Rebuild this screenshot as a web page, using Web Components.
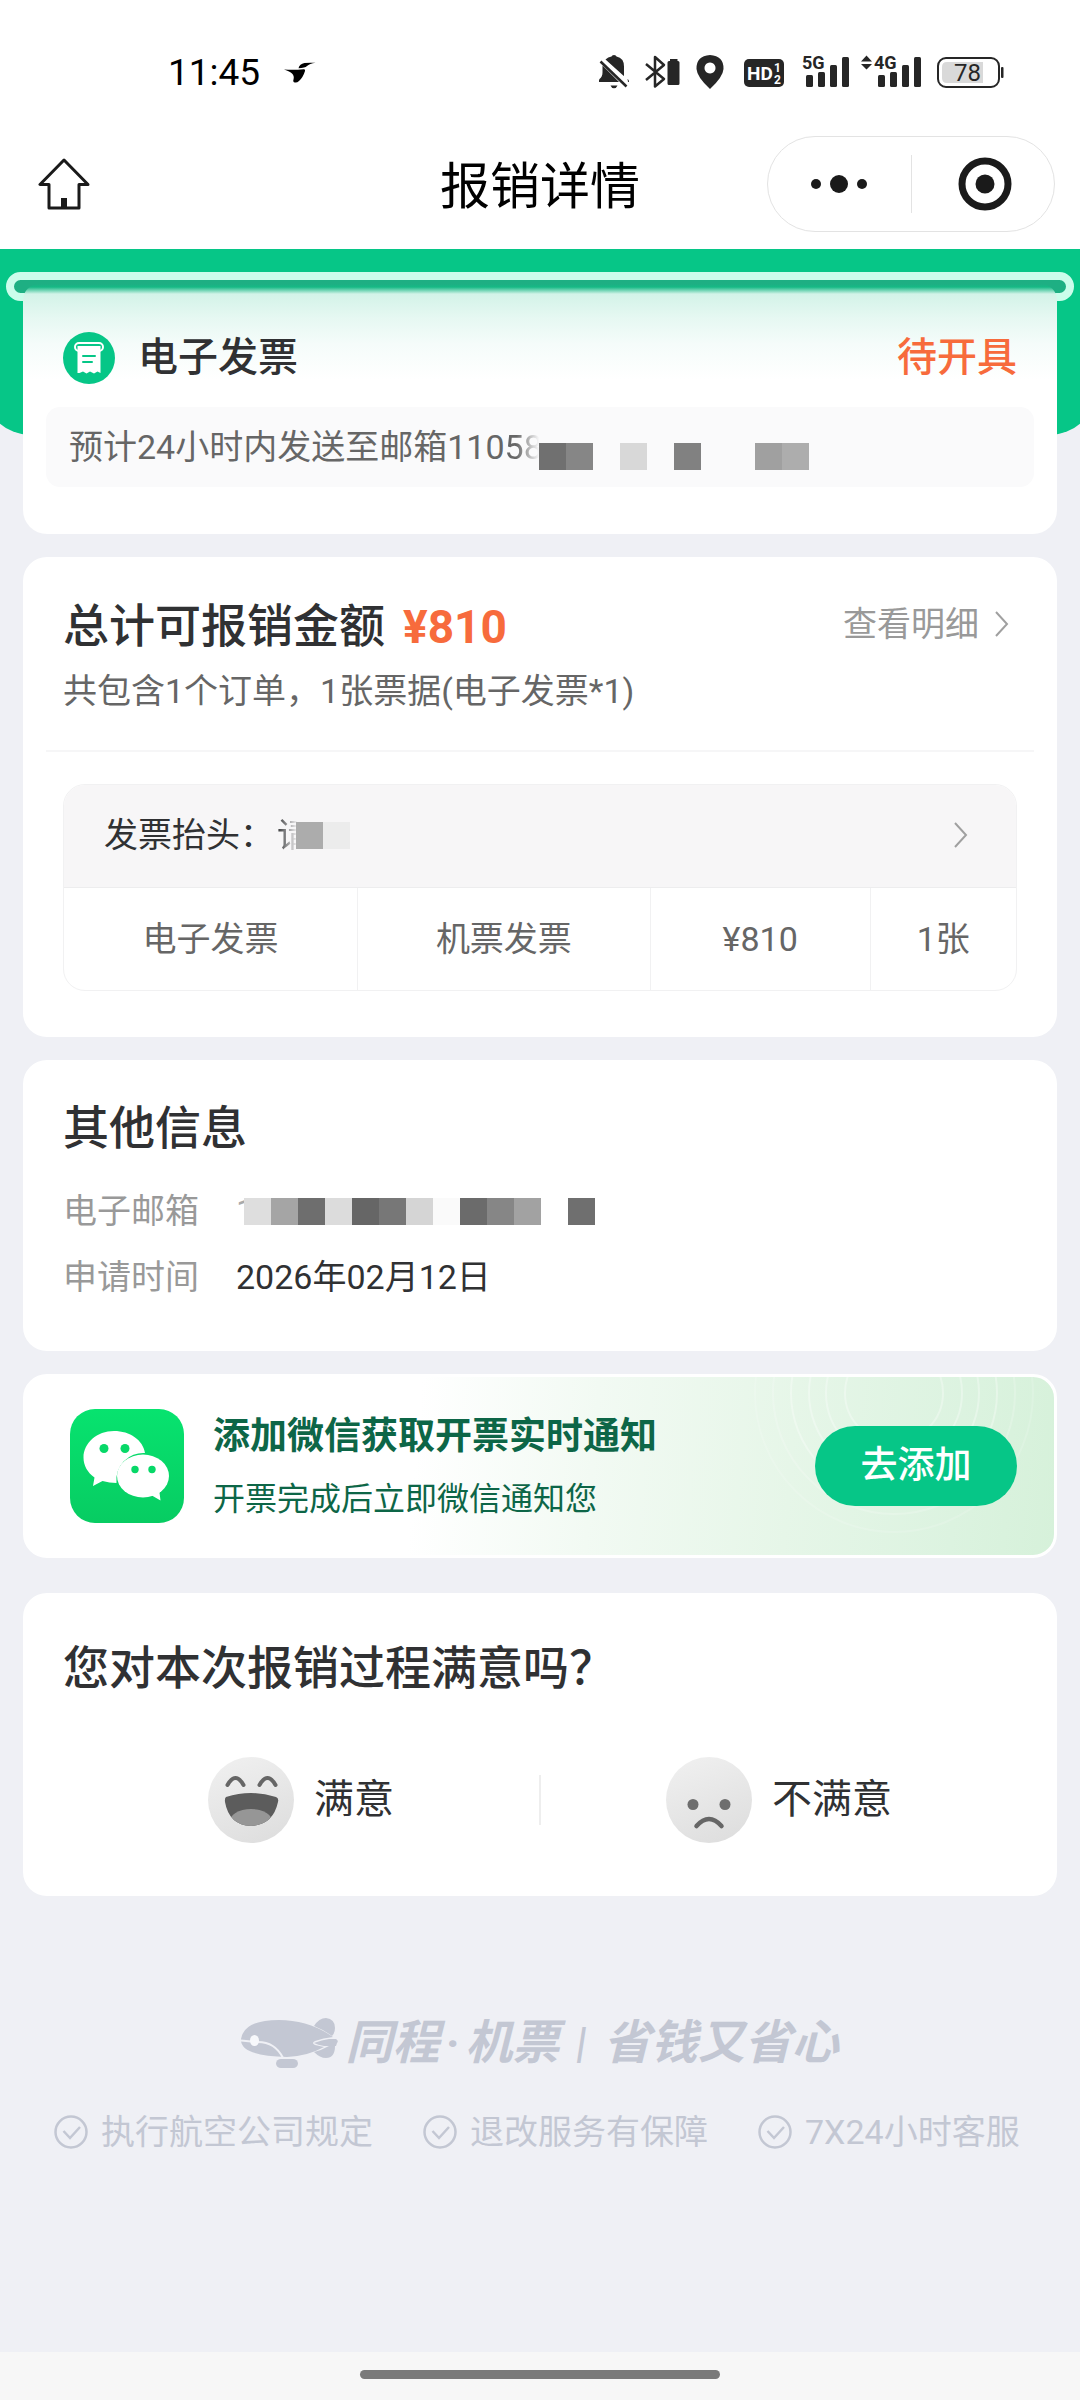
<!DOCTYPE html>
<html lang="zh-CN">
<head>
<meta charset="utf-8">
<meta name="viewport" content="width=device-width, initial-scale=1">
<title>报销详情</title>
<style>
  html, body { margin: 0; }
  body {
    --green: #06c687;
    --orange: #f76b3c;
    --ink: #303133;
    --text: #666;
    --muted: #999;
    --line: #f1f1f2;
    background: #eff0f5;
    color: var(--ink);
    font-family: Roboto, "Noto Sans CJK SC", sans-serif;
    font-size: 34px;
    line-height: 48px;
  }
</style>
</head>
<body>
<reimburse-page></reimburse-page>

<script>
const reset = `
  *, *::before, *::after { box-sizing: border-box; }
  button { font: inherit; color: inherit; background: none; border: 0; padding: 0; margin: 0; text-align: inherit; }
  a { color: inherit; text-decoration: none; }
  h1, h2, h3, p, dl, dd, dt, ul { margin: 0; padding: 0; font: inherit; }
  svg { display: block; flex: none; }
`;
function define(name, html) {
  const tpl = document.createElement('template');
  tpl.innerHTML = html.replace('<style>', '<style>' + reset);
  customElements.define(name, class extends HTMLElement {
    constructor() {
      super();
      this.attachShadow({ mode: 'open' }).append(tpl.content.cloneNode(true));
    }
  });
}

define('status-bar', `
<style>
  :host { display: flex; justify-content: space-between; align-items: flex-start; padding: 54px 76px 0 168px; height: 112px; color: #000; }
  .time { display: flex; align-items: center; gap: 24px; font-size: 37px; line-height: 38px; }
  .icons { display: flex; }
  .icons svg { fill: #262626; overflow: visible; }
</style>
<div class="time"><span>11:45</span>
  <svg width="32" height="22" viewBox="287 63 32 22"><path d="M287 70.500q10 .8 19.500-.3q2.200-.2 1.500 1.800q-2 6.500-6 10q-2 1.800-4 1.500q-2.500-.3-1.500-3q1-3.500-1.500-6q-2-2.200-8-4z"/><path d="M301.500 69.200q1-4.200 6-5.200q5-.6 11-.2q-6 1-8.500 3.200q-2 2-8.500 2.200z"/></svg>
</div>
<div class="icons">
  <svg width="46" height="36" viewBox="599 54 46 36"><path d="M605.500 59.500q2.500-2.600 6-3q.3-1.500 2.500-1.500t2.500 1.500q7.500 1.500 7.500 10v9l-.2.500zM602.500 65.500v7q0 4-3 6.500q-.8 1-.5 3h20zM627.500 78.800q1.700 1.200 1.500 3.200h-1zM610.500 85.500h7q-1 2.700-3.500 2.700t-3.500-2.700z"/><path d="M600.500 61.500l26 25" stroke="#262626" stroke-width="2.500" fill="none"/></svg>
  <svg width="51" height="36" viewBox="645 54 51 36"><path d="M646 64l18 15-9 7.500V57l9 8-18 15" fill="none" stroke="#262626" stroke-width="2.500" stroke-linejoin="round"/><path d="M670 59h7.500v2h.5q1.500 0 1.500 1.500v21q0 1.500-1.500 1.500h-9q-1.500 0-1.500-1.500v-21q0-1.500 1.500-1.500h1z"/></svg>
  <svg width="48" height="36" viewBox="696 54 48 36"><path fill-rule="evenodd" d="M710 55q-14 1-13.500 14q.5 8 13.500 20q13-12 13.500-20q.5-13-13.500-14zM710 62.500a5.500 5.500 0 1 0 .01 0z"/></svg>
  <svg width="57" height="36" viewBox="744 54 57 36"><rect x="744" y="59" width="40" height="28" rx="5"/><g fill="#fff" font-weight="700"><text x="747" y="80" font-size="19">HD</text><text x="774" y="72" font-size="12">1</text><text x="774" y="84" font-size="12">2</text></g></svg>
  <svg width="60" height="36" viewBox="801 54 60 36"><text x="802" y="69" font-size="18" font-weight="700">5G</text><rect x="806" y="75" width="7" height="12" rx="1.500"/><rect x="818" y="72" width="7" height="15" rx="1.500"/><rect x="830" y="65" width="7" height="22" rx="1.500"/><rect x="842" y="57" width="7" height="30" rx="1.500"/></svg>
  <svg width="76" height="36" viewBox="861 54 76 36"><path d="M861 61.500l5.500-6 5.500 6zM861 64l5.500 5.500 5.500-5.500z"/><text x="874" y="69" font-size="18" font-weight="700">4G</text><rect x="878" y="75" width="7" height="12" rx="1.500"/><rect x="890" y="72" width="7" height="15" rx="1.500"/><rect x="902" y="65" width="7" height="22" rx="1.500"/><rect x="914" y="57" width="7" height="30" rx="1.500"/></svg>
  <svg width="67" height="36" viewBox="937 54 67 36"><rect x="938" y="58" width="61" height="29" rx="8" fill="#fff" stroke="#262626" stroke-width="2"/><path d="M947 62h36v21h-36q-5 0-5-5v-11q0-5 5-5z" fill="#d9d9d9"/><text x="954" y="81" font-size="24">78</text><rect x="1001" y="67" width="2.500" height="11" rx="1"/></svg>
</div>`);

define('nav-bar', `
<style>
  :host { display: grid; grid-template-columns: 1fr auto 1fr; align-items: center; padding: 24px 25px 17px; background: #fff; color: #000; }
  h1 { font-size: 50px; line-height: 60px; padding-top: 6px; }
  .home { justify-self: start; margin-left: 13px; }
  .capsule { justify-self: end; display: flex; align-items: center; width: 288px; height: 96px; border: 1px solid #e3e3e3; border-radius: 48px; }
  .capsule button { flex: 1; display: flex; justify-content: center; }
  .capsule button + button { border-left: 1px solid #e3e3e3; }
</style>
<button class="home" aria-label="首页"><svg width="52" height="52" viewBox="0 0 52 52" fill="none" stroke="#1a1a1a" stroke-width="3" stroke-linejoin="round"><path d="M26 2L2 26.500h9V50h30V26.500h9z"/><path d="M26 40v10" stroke-width="6"/></svg></button>
<h1><slot></slot></h1>
<div class="capsule">
  <button aria-label="更多"><svg width="58" height="58" viewBox="0 0 58 58" fill="#1a1a1a"><circle cx="6" cy="29" r="5"/><circle cx="29" cy="29" r="9"/><circle cx="52" cy="29" r="5"/></svg></button>
  <button aria-label="关闭"><svg width="58" height="58" viewBox="0 0 58 58"><circle cx="31" cy="29" r="23" fill="none" stroke="#1a1a1a" stroke-width="7"/><circle cx="31" cy="29" r="9.500" fill="#1a1a1a"/></svg></button>
</div>`);

define('page-card', `
<style>
  :host { display: block; margin: 0 23px; padding: 40px 23px 46px; background: #fff; border-radius: 24px; }
  .inner { padding: 0 17px; }
  h2 { font-size: 46px; line-height: 56px; font-weight: 500; }
</style>
<div class="inner"><h2><slot name="title"></slot></h2></div>
<slot></slot>`);

customElements.define('mosaic-strip', class extends HTMLElement {
  connectedCallback() {
    const root = this.attachShadow({ mode: 'open' });
    const cells = this.getAttribute('colors').split(' ')
      .map(c => `<i style="background:${c === '-' ? 'transparent' : c}"></i>`).join('');
    root.innerHTML = `<style>:host{display:flex;flex:none;position:relative}i{width:27px;height:27px}</style>${cells}`;
  }
});

define('chevron-icon', `
<style>:host { display: block; }</style>
<svg width="14" height="26" viewBox="0 0 14 26" fill="none" stroke="#a0a0a0" stroke-width="2"><path d="M1 1l11 12L1 25"/></svg>`);

define('invoice-hero', `
<style>
  :host { display: block; position: relative; overflow: hidden; padding-top: 23px; }
  .backdrop { position: absolute; inset: 0 -17px 99px; background: var(--green); border-radius: 0 0 48px 48px; }
  .slit { position: relative; margin: 0 6px; height: 29px; border: 8px solid #cbfdeb; border-radius: 15px; background: #1eaf83; }
  .card { position: relative; margin: -17px 23px 0; padding: 48px 23px 47px; border-radius: 16px 16px 24px 24px;
    background: linear-gradient(#1eaf83 0, #16b985 3px, #d3f3e8 10px, #e6f8f2 34px, #f5fcfa 60px, #fff 96px); }
  .row { display: flex; align-items: center; gap: 23px; padding: 0 17px; font-size: 40px; line-height: 52px; font-weight: 500; }
  .state { margin-left: auto; color: var(--orange); }
  .note { display: flex; align-items: center; height: 80px; margin-top: 23px; padding: 0 23px; background: #fafafb; border-radius: 14px; color: var(--text); }
  .fade { -webkit-mask: linear-gradient(90deg, #000 30%, transparent 90%); mask: linear-gradient(90deg, #000 30%, transparent 90%); }
  mosaic-strip { margin: 18px 0 0 -4px; }
</style>
<div class="backdrop"></div>
<div class="slit"></div>
<div class="card">
  <div class="row">
    <svg width="52" height="52" viewBox="0 0 52 52"><circle cx="26" cy="26" r="26" fill="#06c687"/><rect x="12" y="11" width="28" height="8" rx="4" fill="none" stroke="#fff" stroke-width="2"/><path d="M14.500 14h23v27l-3-1.500-3.500 2-4-2-3.500 2-3.500-2-3.500 1.500h-2z" fill="#fff"/><path d="M20 24h12M20 30h9" stroke="#06c687" stroke-width="2" stroke-linecap="round"/></svg>
    <span>电子发票</span><span class="state">待开具</span>
  </div>
  <p class="note"><span>预计24小时内发送至邮箱110</span><span class="fade">58</span><mosaic-strip colors="#707070 #868686 - #d8d8d8 - #818181 - - #a0a0a0 #adadad"></mosaic-strip></p>
</div>`);

define('amount-summary', `
<style>
  :host { display: block; }
  .amount { margin-left: 18px; color: var(--orange); font-weight: 700; font-size: 46px; line-height: 56px; padding-top: 2px; }
  .top { display: flex; align-items: center; padding: 0 17px; }
  h2 { font-size: 46px; line-height: 56px; font-weight: 500; }
  .more { margin-left: auto; display: flex; align-items: center; gap: 16px; color: var(--muted); padding: 0 8px 4px 0; }
  .desc { margin-top: 12px; padding: 0 17px 35px; border-bottom: 2px solid #f6f6f7; color: var(--text); }
  .box { margin: 32px 17px 0; border: 1px solid var(--line); border-radius: 22px; overflow: hidden; }
  table { width: 100%; table-layout: fixed; border-spacing: 0; color: var(--text); text-align: center; }
  th { padding: 0; font-weight: 400; background: #f7f6f7; color: var(--ink); border-bottom: 1px solid #ededee; }
  th button { display: flex; align-items: center; width: 100%; height: 102px; padding: 0 48px 2px 40px; }
  th chevron-icon { margin-left: auto; }
  td { height: 102px; padding: 0; }
  td + td { border-left: 1px solid var(--line); }
  .fade { margin-left: 3px; -webkit-mask: linear-gradient(90deg, #000, transparent 60%); mask: linear-gradient(90deg, #000, transparent 60%); }
  th mosaic-strip { margin-left: -15px; }
  .a { width: calc(100% * 4 / 13); } .b { width: calc(100% * 3 / 13); }
</style>
<div class="top"><h2>总计可报销金额</h2><span class="amount">¥810</span><a class="more" href="#detail">查看明细<chevron-icon></chevron-icon></a></div>
<p class="desc">共包含1个订单，1张票据(电子发票*1)</p>
<div class="box"><table>
  <colgroup><col class="a"><col class="a"><col class="b"><col></colgroup>
  <thead><tr><th colspan="4"><button><span>发票抬头：</span><span class="fade">请</span><mosaic-strip colors="#acacac #ececec"></mosaic-strip><chevron-icon></chevron-icon></button></th></tr></thead>
  <tbody><tr><td>电子发票</td><td>机票发票</td><td>¥810</td><td>1张</td></tr></tbody>
</table></div>`);

define('info-list', `
<style>
  :host { display: block; padding: 22px 17px 0; }
  dl { display: grid; grid-template-columns: auto 1fr; column-gap: 37px; line-height: 66px; }
  dt { color: var(--muted); }
  dd { display: flex; align-items: center; }
  .one { color: #aaa; }
  dd mosaic-strip { margin-left: -11px; }
</style>
<dl>
  <dt>电子邮箱</dt><dd><span class="one">1</span><mosaic-strip colors="#dedede #a5a5a5 #6e6e6e #dcdcdc #666 #777 #d5d5d5 #fafafa #6b6b6b #868686 #a2a2a2 - #6f6f6f"></mosaic-strip></dd>
  <dt>申请时间</dt><dd>2026年02月12日</dd>
</dl>`);

define('wechat-banner', `
<style>
  :host { display: flex; align-items: center; position: relative; overflow: hidden; margin: 0 23px; height: 184px; padding: 0 37px 0 44px; border: 3px solid #fff; border-radius: 24px;
    background: linear-gradient(95deg, #fff 38%, #f2faf3 55%, #e6f6e8 74%, #dcf3e0 90%, #d6f1da); color: #0d6647; }
  .rings { position: absolute; top: 0; right: 0; }
  .logo { position: relative; }
  .copy { margin-left: 29px; position: relative; }
  h3 { font-size: 37px; line-height: 56px; font-weight: 700; }
  p { font-size: 32px; line-height: 48px; margin-top: 10px; }
  button { position: relative; margin-left: auto; width: 202px; height: 80px; border-radius: 40px; background: var(--green); color: #fff; text-align: center; font-size: 37px; font-weight: 500; }
</style>
<svg class="rings" width="320" height="178" viewBox="734 1377 320 178" fill="none" stroke="#fff" stroke-opacity=".32" stroke-width="2"><circle cx="894" cy="1393" r="49"/><circle cx="894" cy="1393" r="68"/><circle cx="894" cy="1393" r="85"/><circle cx="894" cy="1393" r="103"/><circle cx="894" cy="1393" r="121" stroke-opacity=".2"/><circle cx="894" cy="1393" r="139" stroke-opacity=".15"/></svg>
<svg class="logo" width="114" height="114" viewBox="0 0 114 114"><defs><linearGradient id="g" x2="0" y2="1"><stop stop-color="#07e36f"/><stop offset="1" stop-color="#07cc62"/></linearGradient></defs><rect width="114" height="114" rx="25" fill="url(#g)"/>
  <path d="M44 22C27 22 13.500 34 13.500 48.500c0 8 4 15 11 20l-1.500 8.500 9.500-5q7 2 14 2a27 27 0 0 1 28.500-30C73 31 60 22 44 22z" fill="#fff"/>
  <ellipse cx="73" cy="67" rx="26" ry="21.500" fill="#fff"/><path d="M81 86l9.500 5.500-1-8 3-3z" fill="#fff"/>
  <g fill="#07d868"><circle cx="34" cy="39.500" r="4.500"/><circle cx="55" cy="39.500" r="4.500"/><circle cx="65" cy="60.500" r="3.700"/><circle cx="82" cy="60.500" r="3.700"/></g></svg>
<div class="copy"><h3>添加微信获取开票实时通知</h3><p>开票完成后立即微信通知您</p></div>
<button>去添加</button>`);

define('mood-survey', `
<style>
  :host { display: flex; align-items: center; margin: 61px 17px 0; }
  button { flex: 1; display: flex; align-items: center; justify-content: center; gap: 20px; font-size: 40px; }
  hr { width: 2px; height: 50px; border: 0; margin: 0; background: #eee; }
</style>
<button><svg width="86" height="86" viewBox="0 0 86 86"><defs><linearGradient id="f" x1=".3" y1="0" x2=".7" y2="1"><stop stop-color="#efefef"/><stop offset="1" stop-color="#dedede"/></linearGradient><clipPath id="m"><path d="M18 40q25-8 50 0q3 1 2 5q-5 23-27 24q-22-1-26-24q-.5-4 1-5z"/></clipPath></defs><circle cx="43" cy="43" r="43" fill="url(#f)"/><path d="M19.500 28q8-14 16 0M51.500 28q8-14 16 0" fill="none" stroke="#666" stroke-width="4" stroke-linecap="round"/><g clip-path="url(#m)"><rect x="10" y="30" width="66" height="40" fill="#5c5c5c"/><ellipse cx="43" cy="66" rx="22" ry="14" fill="#969696"/></g></svg><span>满意</span></button>
<hr>
<button><svg width="86" height="86" viewBox="0 0 86 86"><defs><linearGradient id="f" x1=".3" y1="0" x2=".7" y2="1"><stop stop-color="#efefef"/><stop offset="1" stop-color="#dedede"/></linearGradient></defs><circle cx="43" cy="43" r="43" fill="url(#f)"/><circle cx="27" cy="47.500" r="5.500" fill="#6e6e6e"/><circle cx="59" cy="47.500" r="5.500" fill="#6e6e6e"/><path d="M30.500 69q12.500-14 25 0" fill="none" stroke="#666" stroke-width="4.500" stroke-linecap="round"/></svg><span>不满意</span></button>`);

define('check-item', `
<style>:host { display: flex; align-items: center; gap: 13px; line-height: 34px; white-space: nowrap; }</style>
<svg width="34" height="34" viewBox="0 0 34 34" fill="none" stroke="currentColor" stroke-width="2.500"><circle cx="17" cy="17" r="15.500"/><path d="M9.500 16l6.500 7 10-11"/></svg><slot></slot>`);

define('brand-footer', `
<style>
  :host { display: block; margin-top: 119px; color: #c3c7d3; }
  .brand { display: flex; justify-content: center; align-items: center; font-size: 47px; line-height: 56px; font-weight: 700; font-style: italic; white-space: nowrap; }
  .name { margin-left: 6px; }
  .dot { padding: 0 6px; }
  .bar { font-size: 42px; margin: 0 17px; }
  .promises { display: flex; gap: 50px; margin-top: 44px; padding: 0 54px; }
</style>
<div class="brand">
  <svg width="98" height="50" viewBox="0 0 98 50" fill="#c3c7d3"><path d="M73 8q5-8 12-8q9 1 9 10q0 5-3 8q-8-6-18-10z"/><path d="M73 34q8-2 15-6h6q0 12-9 12q-6 0-12-6z"/><path d="M73 25q8-3 15-4h7q3 2 1 4l-1 3H83q-6-1-10-3z"/><path d="M0 21Q3 2 38 2Q68 2 92 19q-10 1-18 4q-4 2 0 4l9 2Q67 38 46 39Q-1 38 0 21z"/><rect x="35" y="41" width="22" height="9" rx="5"/><path d="M0 22.500l10 1M17 24q17 0 25 16" fill="none" stroke="#eff0f5" stroke-width="2"/><ellipse cx="13.500" cy="22.500" rx="4.500" ry="5.500" fill="#f7f8fb"/></svg>
  <span class="name">同程<span class="dot">·</span>机票</span><span class="bar">|</span><span>省钱又省心</span>
</div>
<div class="promises"><check-item>执行航空公司规定</check-item><check-item>退改服务有保障</check-item><check-item>7X24小时客服</check-item></div>`);

define('home-indicator', `
<style>
  :host { display: block; margin-top: auto; padding: 18px 0 21px; background: #f7f7f7; }
  div { width: calc(100% / 3); height: 9px; margin: 0 auto; border-radius: 5px; background: #7a7a7a; }
</style><div></div>`);

define('reimburse-page', `
<style>
  :host { display: flex; flex-direction: column; min-height: 100vh; }
  header { background: #fff; }
  main { display: flex; flex-direction: column; gap: 23px; }
  .summary { padding-bottom: 46px; }
  .info { padding-bottom: 41px; }
  .survey { margin-top: 12px; padding: 47px 23px 53px; }
</style>
<header><status-bar></status-bar><nav-bar>报销详情</nav-bar></header>
<main>
  <invoice-hero></invoice-hero>
  <page-card class="summary"><amount-summary></amount-summary></page-card>
  <page-card class="info"><span slot="title">其他信息</span><info-list></info-list></page-card>
  <wechat-banner></wechat-banner>
  <page-card class="survey"><span slot="title">您对本次报销过程满意吗？</span><mood-survey></mood-survey></page-card>
</main>
<brand-footer></brand-footer>
<home-indicator></home-indicator>`);
</script>
</body>
</html>
